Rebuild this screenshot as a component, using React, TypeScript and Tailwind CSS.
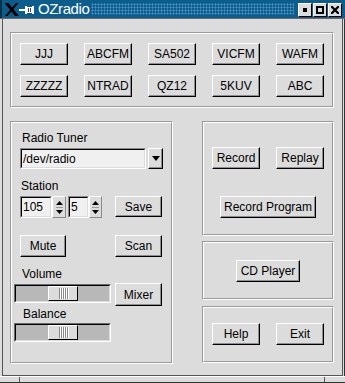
import React from "react";

const F = "font-['Liberation_Sans',Arial,sans-serif]";

function Btn({ children, className = "" }: { children: React.ReactNode; className?: string }) {
  return (
    <div
      className={`shrink-0 flex items-center justify-center bg-[#dcdcdc] border border-t-white border-l-white border-b-black border-r-black shadow-[inset_-1px_-1px_0_#8e8e8e] text-[12px] leading-none text-black ${className}`}
    >
      {children}
    </div>
  );
}

function Group({ className = "", inner = "", children }: { className?: string; inner?: string; children?: React.ReactNode }) {
  return (
    <div className={`shrink-0 border border-t-[#9a9a9a] border-l-[#9a9a9a] border-b-white border-r-white ${className}`}>
      <div className={`h-full border border-t-white border-l-white border-b-[#9a9a9a] border-r-[#9a9a9a] ${inner}`}>{children}</div>
    </div>
  );
}

function Sunken({ children, className = "" }: { children?: React.ReactNode; className?: string }) {
  return (
    <div className={`shrink-0 border border-t-[#8a8a8a] border-l-[#8a8a8a] border-b-white border-r-white ${className}`}>
      <div className="h-full border border-t-black border-l-black border-b-[#dcdcdc] border-r-[#dcdcdc] bg-[#f0f0f0] flex items-center pl-[1px] text-[12px] leading-none">
        {children}
      </div>
    </div>
  );
}

function Spin({ className = "" }: { className?: string }) {
  return (
    <div className={`shrink-0 flex flex-col items-center justify-center gap-[2px] border border-t-white border-l-white border-b-[#8a8a8a] border-r-[#8a8a8a] ${className}`}>
      <svg width="7" height="4" viewBox="0 0 7 4"><path d="M3.5 0 L7 4 L0 4 Z" fill="#000" /></svg>
      <div className="w-[7px] h-[1px] bg-[#9a9a9a]" />
      <svg width="7" height="4" viewBox="0 0 7 4"><path d="M0 0 L7 0 L3.5 4 Z" fill="#000" /></svg>
    </div>
  );
}

function Slider() {
  return (
    <div className="shrink-0 w-[97px] h-[19px] border border-t-[#6a6a6a] border-l-[#6a6a6a] border-b-white border-r-white">
      <div className="h-full border border-t-black border-l-black border-b-[#dcdcdc] border-r-[#dcdcdc] bg-[#b8b8b8] flex items-center pl-[32px]">
        <div className="w-[30px] h-[15px] bg-[#dcdcdc] border border-t-white border-l-white border-b-black border-r-black flex items-center justify-center gap-[1px]">
          {[0, 1, 2, 3, 4].map((i) => (
            <div key={i} className="w-[1px] h-[11px] bg-[#8a8a8a] shadow-[1px_0_0_#fff]" />
          ))}
        </div>
      </div>
    </div>
  );
}

function TitleBar() {
  return (
    <div className="shrink-0 h-[19px] flex items-stretch bg-[#0d5d8c] border-b border-b-[#6a6a6a]">
      <div className="shrink-0 w-[2px] bg-[#08324c]" />
      <div className="shrink-0 w-[34px] h-[18px]">
        <svg width="34" height="18" viewBox="0 0 34 18">
          <path d="M2.5 3 L6.5 3 L17 16 L13 16 Z" fill="#000" />
          <path d="M14 3 L16.5 3 L5.5 16 L3 16 Z" fill="#000" />
          <rect x="17" y="9" width="6" height="2" fill="#fff" />
          <rect x="23" y="6" width="2" height="8" fill="#fff" />
          <rect x="25" y="7" width="5" height="6" fill="#fff" />
          <rect x="26" y="8" width="1" height="4" fill="#444" />
          <rect x="28" y="8" width="1" height="4" fill="#444" />
          <rect x="30" y="6" width="2" height="8" fill="#fff" />
        </svg>
      </div>
      <div className={`${F} shrink-0 text-white text-[15px] tracking-[-0.4px] leading-[18px] ml-[2px] w-[53px]`}>OZradio</div>
      <div className="flex-1 my-[3px] bg-[radial-gradient(circle,#4a93c4_45%,transparent_50%)] bg-[length:3px_3px]" />
      <div className="shrink-0 flex gap-[1px] pt-[3px] pl-[4px] pr-[3px]">
        <div className="w-[14px] h-[14px] bg-[#dcdcdc] border border-t-white border-l-white border-b-black border-r-black flex items-center justify-center">
          <div className="w-[4px] h-[4px] bg-black" />
        </div>
        <div className="w-[14px] h-[14px] bg-[#dcdcdc] border border-t-white border-l-white border-b-black border-r-black flex items-center justify-center">
          <div className="w-[8px] h-[8px] border-2 border-black" />
        </div>
        <div className="w-[14px] h-[14px] bg-[#dcdcdc] border border-t-white border-l-white border-b-black border-r-black flex items-center justify-center">
          <svg width="8" height="8" viewBox="0 0 8 8">
            <path d="M0 0 L8 8 M8 0 L0 8" stroke="#000" strokeWidth="2.2" />
          </svg>
        </div>
      </div>
    </div>
  );
}

export default function App() {
  const stations = [
    ["JJJ", "ABCFM", "SA502", "VICFM", "WAFM"],
    ["ZZZZZ", "NTRAD", "QZ12", "5KUV", "ABC"],
  ];
  return (
    <div className={`${F} w-[345px] h-[383px] bg-[#dcdcdc] flex flex-col overflow-hidden text-black`}>
      <TitleBar />
      <div className="flex-1 flex">
        <div className="w-[3px] border-l border-l-[#dcdcdc] border-r border-r-[#555]" />
        <div className="flex-1 flex flex-col pl-[7px] pr-[5px] pt-[13px] border-b border-b-[#555]">
          <Group className="w-[324px] h-[76px]" inner="pl-[8px] pt-[9px] flex flex-col gap-[10px]">
            {stations.map((row, r) => (
              <div key={r} className="flex gap-[16px]">
                {row.map((s) => (
                  <Btn key={s} className="w-[48px] h-[22px]">{s}</Btn>
                ))}
              </div>
            ))}
          </Group>
          <div className="flex mt-[13px] gap-[29px]">
            <Group className="w-[163px] h-[243px]" inner="flex flex-col">
              <div className="pl-[10px] mt-[8px] text-[12px] leading-[14px]">Radio Tuner</div>
              <div className="flex gap-[2px] pl-[8px] mt-[3px]">
                <Sunken className="w-[126px] h-[21px]">/dev/radio</Sunken>
                <Btn className="w-[15px] h-[21px]">
                  <svg width="8" height="5" viewBox="0 0 8 5"><path d="M0 0 L8 0 L4 5 Z" fill="#000" /></svg>
                </Btn>
              </div>
              <div className="pl-[9px] mt-[10px] text-[12px] leading-[14px]">Station</div>
              <div className="flex items-start pl-[8px] mt-[3px]">
                <Sunken className="w-[32px] h-[22px]">105</Sunken>
                <Spin className="w-[14px] h-[22px]" />
                <Sunken className="w-[21px] h-[22px] ml-[2px]">5</Sunken>
                <Spin className="w-[13px] h-[22px]" />
                <Btn className="w-[47px] h-[21px] ml-[13px]">Save</Btn>
              </div>
              <div className="flex pl-[8px] mt-[17px]">
                <Btn className="w-[46px] h-[22px]">Mute</Btn>
                <Btn className="w-[47px] h-[22px] ml-[49px]">Scan</Btn>
              </div>
              <div className="pl-[10px] mt-[10px] text-[12px] leading-[14px]">Volume</div>
              <div className="flex items-start pl-[2px] mt-[2px]">
                <div className="mt-[1px]"><Slider /></div>
                <Btn className="w-[47px] h-[23px] ml-[4px]">Mixer</Btn>
              </div>
              <div className="pl-[11px] mt-[1px] text-[12px] leading-[14px]">Balance</div>
              <div className="pl-[2px] mt-[2px]"><Slider /></div>
            </Group>
            <div className="flex flex-col">
              <Group className="w-[132px] h-[115px]" inner="flex flex-col">
                <div className="flex pl-[8px] mt-[24px] gap-[16px]">
                  <Btn className="w-[48px] h-[22px]">Record</Btn>
                  <Btn className="w-[48px] h-[22px]">Replay</Btn>
                </div>
                <div className="flex pl-[16px] mt-[27px]">
                  <Btn className="w-[96px] h-[22px]">Record Program</Btn>
                </div>
              </Group>
              <Group className="w-[132px] h-[59px] mt-[5px]" inner="flex flex-col">
                <div className="flex pl-[32px] mt-[17px]">
                  <Btn className="w-[64px] h-[22px]">CD Player</Btn>
                </div>
              </Group>
              <Group className="w-[132px] h-[57px] mt-[6px]" inner="flex flex-col">
                <div className="flex pl-[8px] mt-[15px] gap-[16px]">
                  <Btn className="w-[48px] h-[22px]">Help</Btn>
                  <Btn className="w-[48px] h-[22px]">Exit</Btn>
                </div>
              </Group>
            </div>
          </div>
        </div>
        <div className="w-[3px] border-l border-l-[#555] border-r border-r-[#333]" />
      </div>
      <div className="h-[7px] flex border-t border-t-white bg-[#dcdcdc] border-b border-b-[#333]">
        <div className="w-[20px] border-r border-r-[#555]" />
        <div className="flex-1 border-r border-r-[#555] mr-[20px]" />
      </div>
    </div>
  );
}
